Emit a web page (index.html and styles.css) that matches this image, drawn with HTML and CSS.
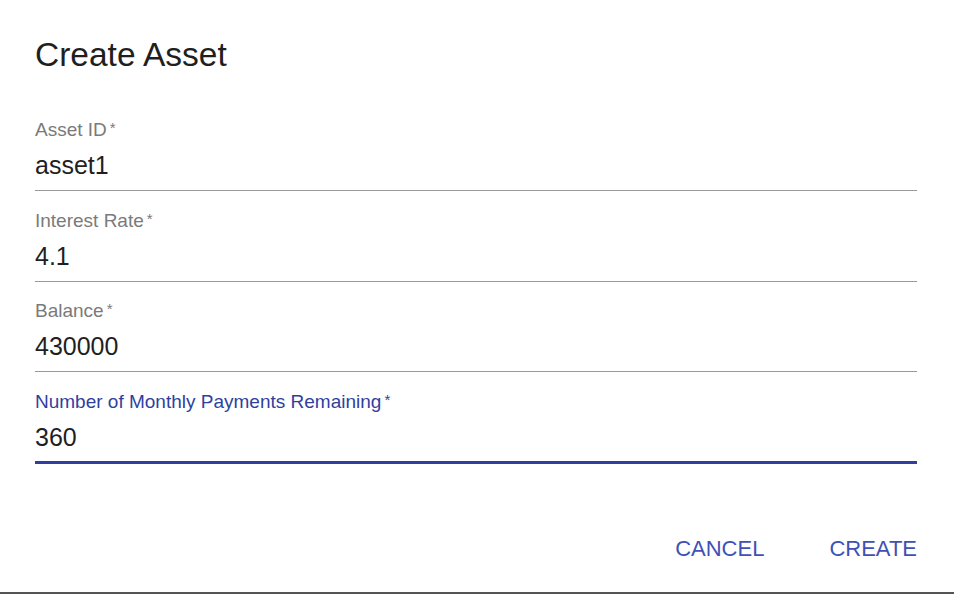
FILE: index.html
```html
<!DOCTYPE html>
<html lang="en">
<head>
<meta charset="utf-8">
<title>Create Asset</title>
<link rel="stylesheet" href="styles.css">
</head>
<body>
<div class="page">
  <div class="dialog">
    <h1 class="title">Create Asset</h1>
    <form class="form">
      <div class="field">
        <label class="label">Asset ID<span class="req">*</span></label>
        <div class="value">asset1</div>
      </div>
      <div class="field">
        <label class="label">Interest Rate<span class="req">*</span></label>
        <div class="value">4.1</div>
      </div>
      <div class="field">
        <label class="label">Balance<span class="req">*</span></label>
        <div class="value">430000</div>
      </div>
      <div class="field focused">
        <label class="label">Number of Monthly Payments Remaining<span class="req">*</span></label>
        <div class="value">360</div>
      </div>
    </form>
    <div class="actions">
      <button class="btn" type="button">CANCEL</button>
      <button class="btn" type="button">CREATE</button>
    </div>
  </div>
  <div class="edge"></div>
</div>
</body>
</html>
```

FILE: styles.css
```css
html, body {
  margin: 0;
  padding: 0;
  background: #ffffff;
}

body {
  font-family: "Liberation Sans", Arial, Helvetica, sans-serif;
  color: #1f1f1f;
}

.page {
  height: 594px;
  display: flex;
  flex-direction: column;
}

.dialog {
  flex: 1;
  display: flex;
  flex-direction: column;
  padding: 35px 37px 0 35px;
}

.title {
  margin: 0;
  font-size: 33.5px;
  line-height: 40px;
  font-weight: 400;
  color: #1f1f1f;
}

.form {
  display: flex;
  flex-direction: column;
  gap: 17.5px;
  margin-top: 43px;
}

.field {
  display: flex;
  flex-direction: column;
  padding-bottom: 10px;
  border-bottom: 1px solid #9a9a9a;
}

.label {
  font-size: 19px;
  line-height: 24px;
  color: #7a7a7a;
}

.req {
  margin-left: 3px;
  font-size: 15px;
  line-height: 0;
  vertical-align: 3px;
}

.value {
  margin-top: 8px;
  font-size: 25px;
  line-height: 30px;
  color: #1f1f1f;
}

.field.focused {
  padding-bottom: 9px;
  border-bottom: 3px solid #303f9f;
}

.field.focused .label {
  color: #303f9f;
}

.actions {
  display: flex;
  justify-content: flex-end;
  gap: 65px;
  margin-top: 64.5px;
}

.btn {
  font-family: "Liberation Sans", Arial, Helvetica, sans-serif;
  font-size: 22px;
  line-height: 26px;
  color: #3f51b5;
  background: none;
  border: none;
  padding: 8px 0;
  margin: 0;
  cursor: pointer;
}

.edge {
  height: 2px;
  background: #545454;
}
```
